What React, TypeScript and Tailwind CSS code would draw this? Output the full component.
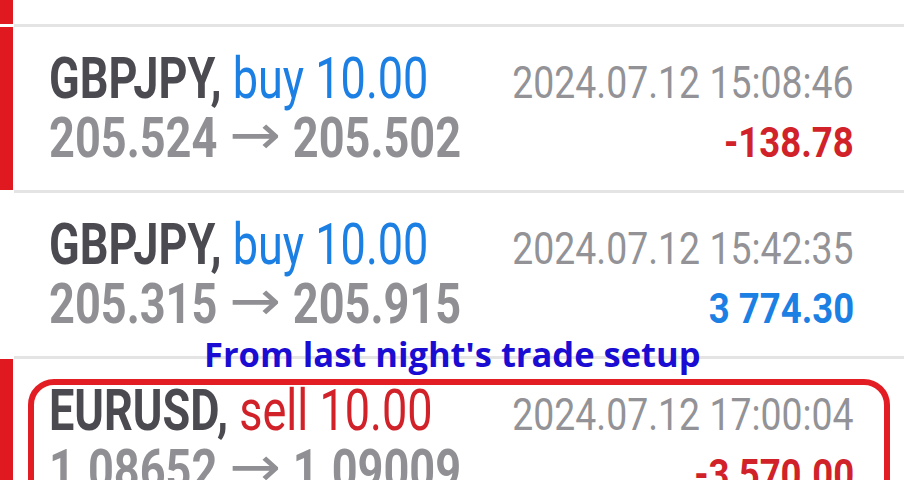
import React from "react";

type Trade = {
  symbol: string;
  side: string;
  volume: string;
  open: string;
  close: string;
  time: string;
  profit: string;
  loss: boolean;
  marked: boolean;
};

const trades: Trade[] = [
  {
    symbol: "GBPJPY",
    side: "buy",
    volume: "10.00",
    open: "205.524",
    close: "205.502",
    time: "2024.07.12 15:08:46",
    profit: "-138.78",
    loss: true,
    marked: true,
  },
  {
    symbol: "GBPJPY",
    side: "buy",
    volume: "10.00",
    open: "205.315",
    close: "205.915",
    time: "2024.07.12 15:42:35",
    profit: "3 774.30",
    loss: false,
    marked: false,
  },
  {
    symbol: "EURUSD",
    side: "sell",
    volume: "10.00",
    open: "1.08652",
    close: "1.09009",
    time: "2024.07.12 17:00:04",
    profit: "-3 570.00",
    loss: true,
    marked: true,
  },
];

const Separator = () => (
  <div className="flex h-[3px] shrink-0">
    <div className="w-[14px] shrink-0 bg-white" />
    <div className="flex-1 bg-[#e4e4e4]" />
  </div>
);

const TradeRow = ({ t }: { t: Trade }) => (
  <div className="flex h-[163px] shrink-0">
    <div className={t.marked ? "w-[13px] shrink-0 bg-[#e0181f]" : "w-[13px] shrink-0 bg-white"} />
    <div className="flex-1 min-w-0 flex flex-col pt-[23px] pl-[36px] pr-[50px]">
      <div className="flex items-baseline leading-[58px]">
        <div className="w-0 flex-1 flex">
          <span className="inline-block shrink-0 origin-left scale-x-[0.79] whitespace-nowrap text-[57px]">
            <span className="font-bold text-[#4a4a50]">{t.symbol},</span>{" "}
            <span className={t.side === "buy" ? "text-[#1c7fe3]" : "text-[#d1222a]"}>
              {t.side} {t.volume}
            </span>
          </span>
        </div>
        <div className="w-0 flex-1 flex justify-end">
          <span className="inline-block shrink-0 origin-right scale-x-[0.85] whitespace-nowrap text-[44px] text-[#939397]">
            {t.time}
          </span>
        </div>
      </div>
      <div className="-mt-[3px] flex items-baseline leading-[58px]">
        <div className="w-0 flex-1 flex">
          <span className="inline-block shrink-0 origin-left scale-x-[0.82] whitespace-nowrap text-[55px] font-bold text-[#909094]">
            {t.open}
            <span className="inline-block w-[92px] text-center font-['DejaVu_Sans',sans-serif] text-[56px] font-normal">
              <span className="inline-block -translate-y-[3px] scale-x-[1.35]">→</span>
            </span>
            {t.close}
          </span>
        </div>
        <div className="w-0 flex-1 flex justify-end">
          <span
            className={
              "inline-block shrink-0 origin-right scale-x-[0.85] whitespace-nowrap text-[43px] font-bold " +
              (t.loss ? "text-[#d1222a]" : "text-[#1c7fe3]")
            }
          >
            {t.profit}
          </span>
        </div>
      </div>
    </div>
  </div>
);

export default function App() {
  return (
    <div className="relative w-[904px] h-[480px] overflow-hidden bg-white font-['Roboto',sans-serif]">
      <div className="flex flex-col">
        <div className="flex h-[24px] shrink-0">
          <div className="w-[13px] shrink-0 bg-[#e0181f]" />
          <div className="flex-1" />
        </div>
        <Separator />
        <TradeRow t={trades[0]} />
        <Separator />
        <TradeRow t={trades[1]} />
        <Separator />
        <TradeRow t={trades[2]} />
      </div>

      {/* annotation overlay */}
      <div className="absolute left-[204px] top-[334px] whitespace-nowrap font-['Open_Sans',sans-serif] text-[34.5px] font-bold leading-[40px] text-[#1a0cd2]">
        From last night's trade setup
      </div>
      <div className="absolute left-[28px] top-[379px] w-[862px] h-[200px] rounded-[26px] border-[6px] border-[#e31d24]" />
    </div>
  );
}
